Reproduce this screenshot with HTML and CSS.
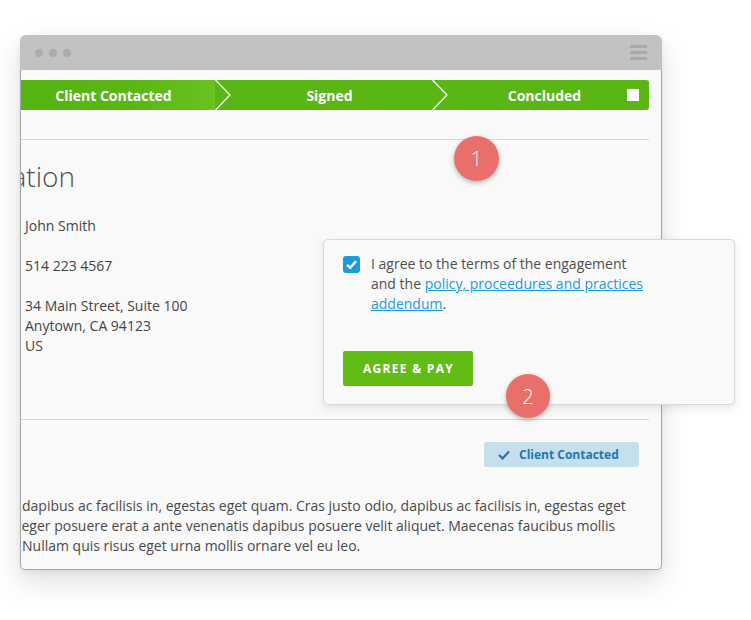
FILE: index.html
```html
<!DOCTYPE html>
<html lang="en">
<head>
<meta charset="utf-8">
<title>Engagement</title>
<link rel="stylesheet" href="styles.css">
</head>
<body>
<div class="stage">
  <div class="window">
    <div class="titlebar">
      <div class="dots"><span></span><span></span><span></span></div>
      <div class="menu"><span></span><span></span><span></span></div>
    </div>
    <div class="win-body">
      <div class="steps">
        <div class="step step-1">Client Contacted
          <svg class="chev" viewBox="0 0 16 30" width="16" height="30"><polyline points="0.5,0 15,15 0.5,30" fill="none" stroke="#ffffff" stroke-width="1.2"/></svg>
        </div>
        <div class="step step-2">Signed
          <svg class="chev" viewBox="0 0 16 30" width="16" height="30"><polyline points="0.5,0 15,15 0.5,30" fill="none" stroke="#ffffff" stroke-width="1.2"/></svg>
        </div>
        <div class="step step-3">Concluded<span class="square"></span></div>
      </div>
      <div class="rule rule-top"></div>
      <div class="title-clip"><h1 class="title">Client Information</h1></div>
      <div class="info">
        <div class="info-item">John Smith</div>
        <div class="info-item">514 223 4567</div>
        <div class="info-item">34 Main Street, Suite 100<br>Anytown, CA 94123<br>US</div>
      </div>
      <div class="rule rule-bottom"></div>
      <div class="status-row">
        <span class="badge">
          <svg class="badge-check" viewBox="0 0 12 10" width="12" height="10"><polyline points="1,5 4.5,8.5 11,1.5" fill="none" stroke="#1c78b0" stroke-width="2.2"/></svg>
          Client Contacted
        </span>
      </div>
      <p class="desc">
        <span class="line">dapibus ac facilisis in, egestas eget quam. Cras justo odio, dapibus ac facilisis in, egestas eget</span>
        <span class="line line-cut">Integer posuere erat a ante venenatis dapibus posuere velit aliquet. Maecenas faucibus mollis</span>
        <span class="line">Nullam quis risus eget urna mollis ornare vel eu leo.</span>
      </p>
    </div>
  </div>

  <div class="marker marker-1">1</div>

  <div class="popover">
    <div class="agree">
      <span class="checkbox">
        <svg viewBox="0 0 17 17" width="17" height="17"><polyline points="4,8.8 7.2,11.8 13,5.2" fill="none" stroke="#ffffff" stroke-width="2.4"/></svg>
      </span>
      <p class="agree-text">I agree to the terms of the engagement and the <a href="#" class="link">policy, proceedures and practices addendum</a>.</p>
    </div>
    <button class="pay-btn" type="button">AGREE &amp; PAY</button>
  </div>

  <div class="marker marker-2">2</div>
</div>
</body>
</html>
```

FILE: styles.css
```css
* { box-sizing: border-box; }

html, body {
  margin: 0;
  padding: 0;
  background: #ffffff;
}

body {
  font-family: "Open Sans", "Liberation Sans", sans-serif;
  color: #444444;
  width: 751px;
  height: 620px;
  overflow: hidden;
}

.stage {
  position: relative;
  padding: 35px 0 0 20px;
  height: 620px;
}

.window {
  width: 642px;
  height: 535px;
  border-radius: 6px;
  box-shadow: 0 12px 28px rgba(0, 0, 0, 0.13), 0 2px 6px rgba(0, 0, 0, 0.06);
  display: flex;
  flex-direction: column;
}

.titlebar {
  height: 35px;
  background: #c2c2c2;
  border-radius: 6px 6px 0 0;
  display: flex;
  align-items: center;
  justify-content: space-between;
  padding: 0 15px 0 15px;
}

.dots {
  display: flex;
  gap: 6px;
}

.dots span {
  width: 8px;
  height: 8px;
  border-radius: 50%;
  background: #acacac;
}

.menu {
  display: flex;
  flex-direction: column;
  gap: 3px;
}

.menu span {
  width: 17px;
  height: 3px;
  background: #a9a9a9;
}

.win-body {
  flex: 1;
  background: #f9f9f9;
  border: 1px solid #a6a6a6;
  border-top: none;
  border-radius: 0 0 5px 5px;
  overflow: hidden;
  padding: 10px 12px 0 0;
}

.steps {
  display: flex;
  height: 30px;
  background: #5ab614;
  border-radius: 0 3px 3px 0;
  color: #ffffff;
  font-weight: 700;
  font-size: 14px;
}

.step {
  position: relative;
  display: flex;
  align-items: center;
  justify-content: center;
  white-space: nowrap;
}

.step-1 {
  width: 194px;
  padding-right: 9px;
  background: linear-gradient(90deg, #55b412 0%, #5ab614 55%, #69c21e 100%);
}

.step-2 {
  width: 217px;
  padding-left: 16px;
  padding-right: 4px;
}

.step-3 {
  width: 217px;
  padding-left: 16px;
  padding-right: 8px;
}

.chev {
  position: absolute;
  right: -16px;
  top: 0;
  z-index: 1;
  display: block;
}

.square {
  position: absolute;
  right: 10px;
  top: 9px;
  width: 12px;
  height: 12px;
  background: #ffffff;
}

.rule {
  height: 1px;
  background: #d9d9d9;
}

.rule-top {
  margin-top: 29px;
}

.title-clip {
  margin-top: 18px;
  width: 54px;
  display: flex;
  justify-content: flex-end;
  overflow: hidden;
}

.title {
  margin: 0;
  flex-shrink: 0;
  white-space: nowrap;
  font-size: 28px;
  font-weight: 300;
  line-height: 36px;
  color: #505050;
}

.info {
  margin-top: 22px;
  padding-left: 4px;
  display: flex;
  flex-direction: column;
  gap: 20px;
  font-size: 14px;
  line-height: 20px;
  color: #444444;
}

.rule-bottom {
  margin-top: 63px;
}

.status-row {
  margin-top: 22px;
  display: flex;
  justify-content: flex-end;
  padding-right: 10px;
}

.badge {
  width: 155px;
  height: 25px;
  border-radius: 3px;
  background: #c6dfec;
  color: #1c78b0;
  font-size: 12px;
  font-weight: 700;
  display: flex;
  align-items: center;
  gap: 9px;
  padding-left: 14px;
  white-space: nowrap;
}

.badge-check {
  display: block;
}

.desc {
  margin: 29px 0 0 0;
  font-size: 14px;
  line-height: 20px;
  color: #4a4a4a;
}

.line {
  display: block;
  white-space: nowrap;
  padding-left: 1px;
}

.line-cut {
  margin-left: -18px;
}

.marker {
  position: absolute;
  width: 45px;
  height: 45px;
  border-radius: 50%;
  background: #e86f6a;
  color: #ffffff;
  font-size: 20px;
  font-weight: 300;
  display: flex;
  align-items: center;
  justify-content: center;
  box-shadow: 0 2px 5px rgba(0, 0, 0, 0.28);
  z-index: 3;
}

.marker-1 {
  left: 454px;
  top: 136px;
}

.marker-2 {
  left: 506px;
  top: 374px;
  width: 44px;
  height: 44px;
}

.popover {
  position: absolute;
  left: 323px;
  top: 239px;
  width: 412px;
  height: 166px;
  background: #f9f9f9;
  border: 1px solid #d8d8d8;
  border-radius: 5px;
  box-shadow: 0 3px 10px rgba(0, 0, 0, 0.1);
  padding: 15px 19px 0 19px;
  z-index: 2;
}

.agree {
  display: flex;
  gap: 11px;
  align-items: flex-start;
}

.checkbox {
  margin-top: 1px;
  width: 17px;
  height: 17px;
  border-radius: 3px;
  background: #1a9bdc;
  flex-shrink: 0;
}

.checkbox svg {
  display: block;
}

.agree-text {
  margin: -1px 0 0 0;
  width: 280px;
  font-size: 14px;
  line-height: 20px;
  color: #4f4f4f;
}

.link {
  color: #1a9bdc;
  text-decoration: underline;
}

.pay-btn {
  margin-top: 37px;
  width: 130px;
  height: 35px;
  border: none;
  border-radius: 2px;
  background: #62bc16;
  color: #ffffff;
  font-family: "Open Sans", "Liberation Sans", sans-serif;
  font-size: 12px;
  font-weight: 700;
  letter-spacing: 1.3px;
  padding: 0 0 0 1px;
  display: block;
}
```
